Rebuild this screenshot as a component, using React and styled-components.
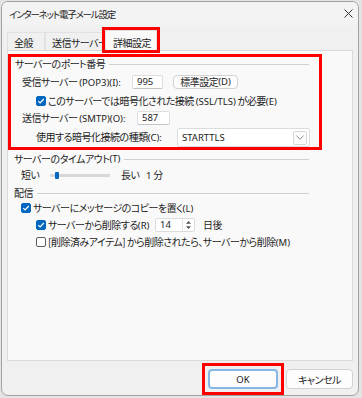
import React from 'react'
import styled, { createGlobalStyle } from 'styled-components'

const GlobalStyle = createGlobalStyle`
	html, body {
		margin: 0;
		padding: 0;
		background: #e4e4e4;
	}
	body {
		font-family: 'Noto Sans CJK JP', 'Noto Sans', sans-serif;
		font-size: 10px;
		letter-spacing: -0.5px;
		color: #1c1c1c;
		font-feature-settings: 'palt' 1;
	}
	* {
		box-sizing: border-box;
	}
`

const Page = styled.div`
	width: 362px;
	height: 398px;
	padding: 1px 0 0 1px;
`

const Window = styled.div`
	display: flex;
	flex-direction: column;
	width: 358px;
	height: 395px;
	border: 1px solid #a2a2a2;
	border-radius: 7px;
	background: #f0f0f0;
	overflow: hidden;
`

const TitleBar = styled.div`
	display: flex;
	align-items: center;
	justify-content: space-between;
	height: 23px;
	padding: 0 5px 0 7px;
	background: #f3f3f3;
	line-height: 14px;
	font-size: 9.5px;
	letter-spacing: -1.2px;
`

const Body = styled.div`
	display: flex;
	flex-direction: column;
	flex: 1;
	padding: 0 5px;
`

const TabStrip = styled.div`
	display: flex;
	align-items: flex-end;
	height: 25px;
`

const Tab = styled.div`
	position: relative;
	width: ${(p) => p.width}px;
	height: ${(p) => (p.active ? 20 : 18)}px;
	padding: 0 0 0 ${(p) => p.pad}px;
	line-height: 14px;
	display: flex;
	align-items: flex-end;
	white-space: nowrap;
	background: ${(p) => (p.active ? '#f9f9f9' : '#f0f0f0')};
	border: 1px solid #e1e1e1;
	border-bottom: none;
	z-index: ${(p) => (p.active ? 1 : 0)};
	outline: ${(p) => (p.active ? '3px solid #ff0000' : 'none')};
`

const Panel = styled.div`
	display: flex;
	flex-direction: column;
	height: 311px;
	border: 1px solid #dadada;
	background: #f9f9f9;
`

const Highlight = styled.div`
	display: flex;
	flex-direction: column;
	width: 314px;
	height: 96px;
	margin-top: 3px;
	border: 3px solid #ff0000;
`

const Section = styled.div`
	display: flex;
	flex-direction: column;
	width: 314px;
	padding: 0 3px;
`

const GroupHeader = styled.div`
	display: flex;
	align-items: center;
	height: 14px;
	margin-top: ${(p) => p.top || 0}px;
	padding: 0 10px 0 ${(p) => p.indent}px;
	line-height: 14px;
	white-space: nowrap;
`

const Rule = styled.div`
	flex: 1;
	height: 1px;
	margin-left: 4px;
	background: #cfcfcf;
`

const Row = styled.div`
	display: flex;
	align-items: center;
	height: ${(p) => p.h || 14}px;
	margin-top: ${(p) => p.top || 0}px;
	padding-left: ${(p) => p.indent}px;
	line-height: 14px;
	white-space: nowrap;
`

const Label = styled.span`
	display: inline-block;
	width: ${(p) => (p.width ? `${p.width}px` : 'auto')};
	margin-left: ${(p) => p.ml || 0}px;
`

const Latin = styled.span`
	font-family: 'Noto Sans', sans-serif;
	font-size: 9.5px;
	letter-spacing: 0;
`

const TextBox = styled.div`
	display: flex;
	align-items: center;
	width: ${(p) => p.width}px;
	height: 14px;
	padding-left: 4px;
	background: #ffffff;
	border: 1px solid #dedede;
	border-bottom-color: #c4c4c4;
	border-radius: 2px;
`

const Button = styled.div`
	display: flex;
	align-items: center;
	justify-content: center;
	width: ${(p) => p.width}px;
	height: ${(p) => p.height}px;
	margin-left: ${(p) => p.ml || 0}px;
	background: #fdfdfd;
	border: ${(p) => (p.primary ? '2px solid #86b7e4' : '1px solid #d2d2d2')};
	border-radius: 4px;
`

const Marker = styled.div`
	display: flex;
	padding: 3px;
	border: 3px solid #ff0000;
`

const Select = styled.div`
	display: flex;
	align-items: center;
	justify-content: space-between;
	width: 133px;
	height: 19px;
	padding: 0 2px 0 4px;
	background: #ffffff;
	border: 1px solid #dcdcdc;
	border-radius: 2px;
`

const DropArrow = styled.div`
	display: flex;
	align-items: center;
	justify-content: center;
	width: 14px;
	height: 14px;
	border: 1px solid #d6d6d6;
	border-radius: 2px;
	background: #fbfbfb;
`

const Box = styled.span`
	display: inline-flex;
	align-items: center;
	justify-content: center;
	flex: none;
	width: 10px;
	height: 10px;
	margin-right: 2px;
	border-radius: 2px;
	background: ${(p) => (p.checked ? '#0067c0' : '#ffffff')};
	border: 1px solid ${(p) => (p.checked ? '#0067c0' : '#5c5c5c')};
`

const Track = styled.div`
	display: flex;
	align-items: center;
	width: 60px;
	height: 14px;
	margin-right: 11px;
	background: linear-gradient(#d8d8d8, #d8d8d8) center / 100% 3px no-repeat;
`

const Thumb = styled.div`
	width: 4px;
	height: 7px;
	margin-left: 5px;
	border-radius: 1px;
	background: #0067c0;
`

const Spinner = styled.div`
	display: flex;
	align-items: center;
	justify-content: space-between;
	width: 40px;
	height: 14px;
	padding-left: 4px;
	background: #ffffff;
	border: 1px solid #dcdcdc;
	border-radius: 2px;
`

const SpinArrows = styled.div`
	display: flex;
	align-items: center;
	justify-content: center;
	width: 12px;
	height: 100%;
	border-left: 1px solid #e2e2e2;
`

const Footer = styled.div`
	display: flex;
	justify-content: flex-end;
	align-items: center;
	gap: 2px;
	padding-top: 2px;
`

const Check = ({ checked }) => (
	<Box checked={checked}>
		{checked && (
			<svg width="8" height="8" viewBox="0 0 8 8">
				<path d="M1.3 4.2 L3.1 6 L6.8 2" fill="none" stroke="#fff" strokeWidth="1.2" />
			</svg>
		)}
	</Box>
)

const App = () => {
	return (
		<Page>
			<GlobalStyle />
			<Window>
				<TitleBar>
					<span>インターネット電子メール設定</span>
					<svg width="9" height="9" viewBox="0 0 9 9">
						<path d="M0.5 0.5 L8.5 8.5 M8.5 0.5 L0.5 8.5" stroke="#333" strokeWidth="1" />
					</svg>
				</TitleBar>
				<Body>
					<TabStrip>
						<Tab width={38} pad={6}>全般</Tab>
						<Tab width={60} pad={6}>送信サーバー</Tab>
						<Tab width={52} pad={7} active>
							詳細設定
						</Tab>
					</TabStrip>
					<Panel>
						<Highlight>
							<GroupHeader indent={4}>
								サーバーのポート番号
								<Rule />
							</GroupHeader>
							<Row h={18} top={2} indent={11}>
								<Label width={110}>
									受信サーバー <Latin>(POP3)(I):</Latin>
								</Label>
								<TextBox width={31}>
									<Latin>995</Latin>
								</TextBox>
								<Button width={65} height={14} ml={10}>
									標準設定<Latin>(D)</Latin>
								</Button>
							</Row>
							<Row h={16} top={2} indent={25}>
								<Check checked />
								<Label>
									このサーバーでは暗号化された接続 <Latin>(SSL/TLS)</Latin> が必要<Latin>(E)</Latin>
								</Label>
							</Row>
							<Row h={18} indent={11}>
								<Label width={115}>
									送信サーバー <Latin>(SMTP)(O):</Latin>
								</Label>
								<TextBox width={33}>
									<Latin>587</Latin>
								</TextBox>
							</Row>
							<Row h={19} top={1} indent={25}>
								<Label width={141}>
									使用する暗号化接続の種類<Latin>(C):</Latin>
								</Label>
								<Select>
									<Latin>STARTTLS</Latin>
									<DropArrow>
										<svg width="8" height="5" viewBox="0 0 8 5">
											<path d="M0.5 0.8 L4 4.2 L7.5 0.8" fill="none" stroke="#8a8a8a" strokeWidth="1" />
										</svg>
									</DropArrow>
								</Select>
							</Row>
						</Highlight>
						<Section>
							<GroupHeader indent={3} top={2}>
								サーバーのタイムアウト<Latin>(T)</Latin>
								<Rule />
							</GroupHeader>
							<Row top={2} indent={10}>
								<Label width={29}>短い</Label>
								<Track>
									<Thumb />
								</Track>
								<Label width={25}>長い</Label>
								<Label>
									<Latin>1</Latin> 分
								</Label>
							</Row>
							<GroupHeader indent={3} top={4}>
								配信
								<Rule />
							</GroupHeader>
							<Row top={1} indent={10}>
								<Check checked />
								<Label>
									サーバーにメッセージのコピーを置く<Latin>(L)</Latin>
								</Label>
							</Row>
							<Row top={3} indent={25}>
								<Check checked />
								<Label width={107}>
									サーバーから削除する<Latin>(R)</Latin>
								</Label>
								<Spinner>
									<Latin>14</Latin>
									<SpinArrows>
										<svg width="7" height="10" viewBox="0 0 7 10">
											<path d="M3.5 1 L6 3.8 L1 3.8 Z" fill="#555" />
											<path d="M3.5 9 L6 6.2 L1 6.2 Z" fill="#555" />
										</svg>
									</SpinArrows>
								</Spinner>
								<Label ml={8}>日後</Label>
							</Row>
							<Row top={3} indent={25}>
								<Check />
								<Label>
									[削除済みアイテム] から削除されたら、サーバーから削除<Latin>(M)</Latin>
								</Label>
							</Row>
						</Section>
					</Panel>
					<Footer>
						<Marker>
							<Button width={70} height={20} primary>
								<Latin>OK</Latin>
							</Button>
						</Marker>
						<Button width={67} height={20}>
							キャンセル
						</Button>
					</Footer>
				</Body>
			</Window>
		</Page>
	)
}

export default App
